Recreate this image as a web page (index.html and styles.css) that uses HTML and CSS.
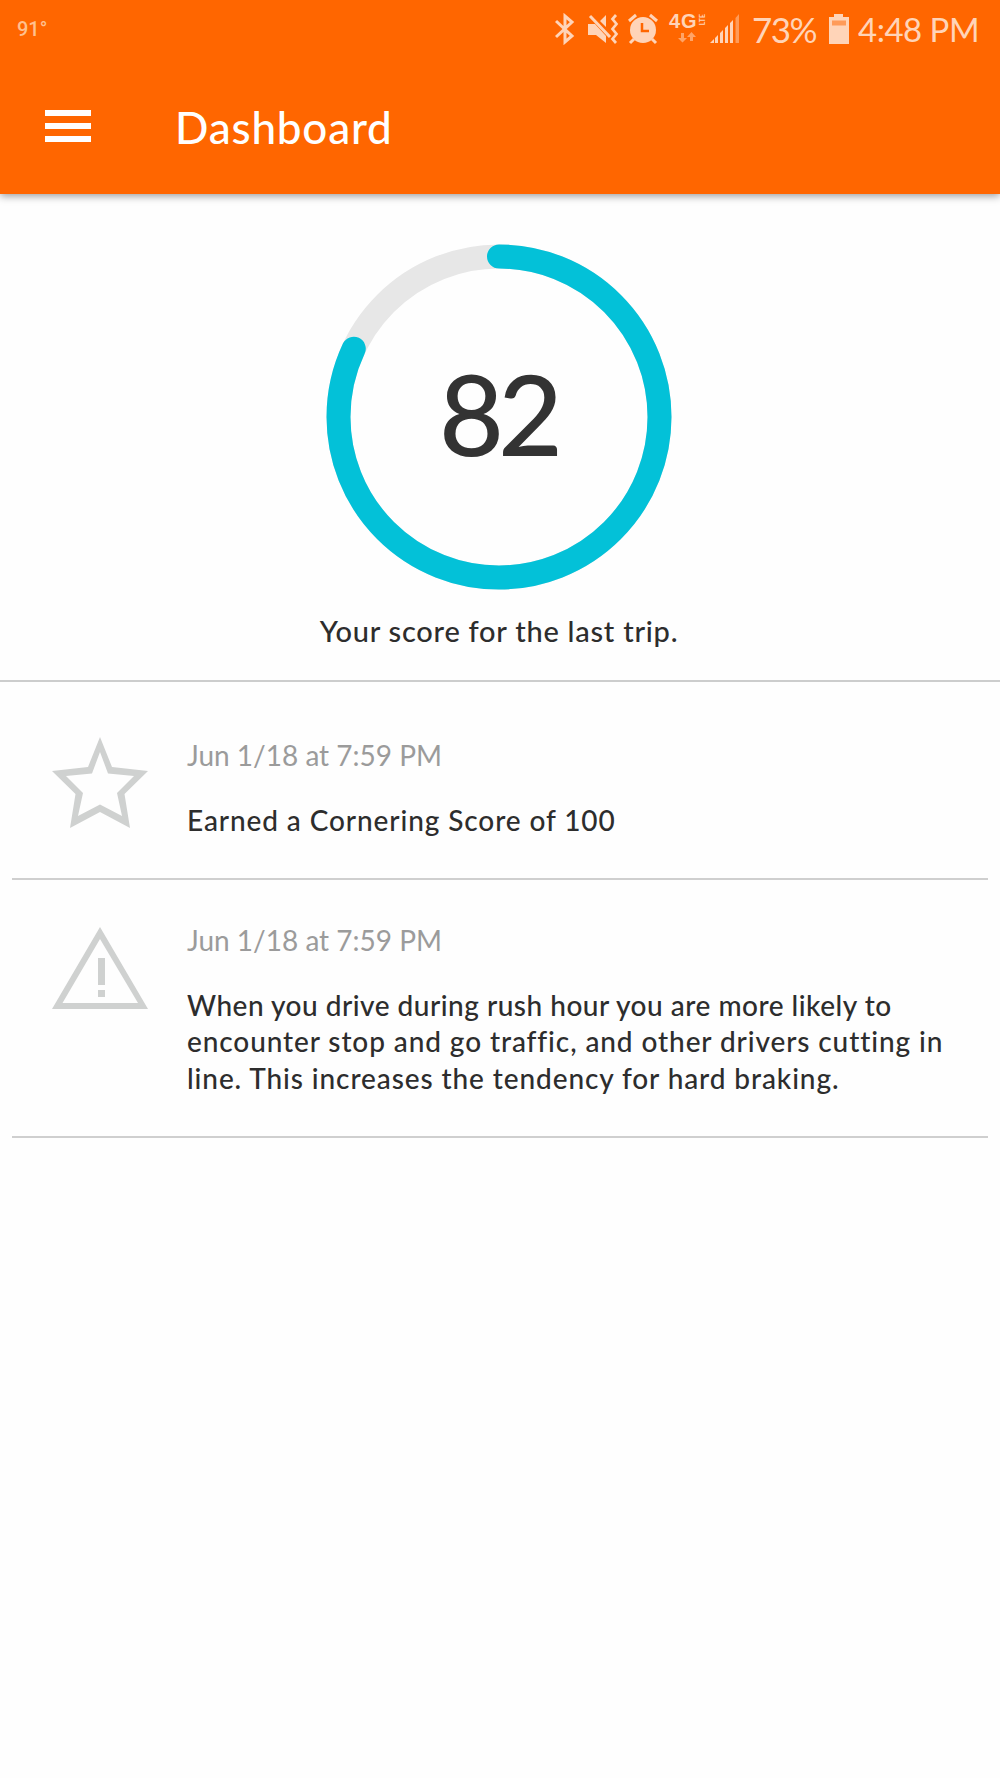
FILE: index.html
```html
<!DOCTYPE html>
<html lang="en">
<head>
  <meta charset="UTF-8">
  <title>Dashboard</title>
  <link rel="stylesheet" href="styles.css">
</head>
<body>

  <header class="header">
    <div class="status-bar">
      <span class="temperature">91°</span>
      <div class="status-icons">
        <svg class="icon-bluetooth" viewBox="0 0 20 32" width="20" height="32">
          <path d="M1 8 L17 23 L10 29 V3 L17 9 L1 24" fill="none" stroke="#ffd4b8" stroke-width="3"/>
        </svg>
        <svg class="icon-mute" viewBox="0 0 32 32" width="32" height="32">
          <path d="M1 11 H8 L19 23 V30 L9 22 H1 Z M13 8 L19 2 V14 Z" fill="#ffd4b8"/>
          <path d="M3 3 L23 24" stroke="#ffd4b8" stroke-width="3"/>
          <path d="M29 2 L25.5 6 L29.5 11 L25.5 16 L29.5 21 L25.5 26 L29 30" fill="none" stroke="#ffd4b8" stroke-width="2.7"/>
        </svg>
        <svg class="icon-alarm" viewBox="0 0 30 32" width="30" height="32">
          <circle cx="15" cy="17" r="13" fill="#ffd4b8"/>
          <path d="M1 8 L8 2 M22 2 L29 8 M6 26 L2 30 M24 26 L28 30" stroke="#ffd4b8" stroke-width="3"/>
          <path d="M14 10 V18 H21" fill="none" stroke="#ff6600" stroke-width="2.5"/>
        </svg>
        <div class="network">
          <span class="network-type">4G</span>
          <span class="network-lte">LTE</span>
          <svg class="network-arrows" viewBox="0 0 18 11" width="18" height="11">
            <path d="M3 1 H6 V6 H9 L4.500 10.500 L0 6 H3 Z M12 9 V5 H9 L13.500 0 L18 5 H15 V9 Z" fill="#ffa467"/>
          </svg>
        </div>
        <svg class="icon-signal" viewBox="0 0 30 30" width="30" height="30">
          <path d="M0 29 L4 25 V29 Z M5 24 L8 21 V29 H5 Z M10 19 L13 16 V29 H10 Z M15 14 L18 11 V29 H15 Z M20 9 L23 6 V29 H20 Z" fill="#ffd4b8"/>
          <path d="M25.500 4 L29 0 V29 H25.500 Z" fill="#ff9b59"/>
        </svg>
        <span class="battery-level">73%</span>
        <svg class="icon-battery" viewBox="0 0 20 30" width="20" height="30">
          <path d="M0 3 H5 V0 H14 V3 H20 V30 H0 Z" fill="#ffd4b8"/>
          <path d="M3 6.500 H17 V11.500 H3 Z" fill="#ff9b59"/>
        </svg>
        <span class="clock">4:48 PM</span>
      </div>
    </div>
    <div class="toolbar">
      <div class="menu-button">
        <span></span>
        <span></span>
        <span></span>
      </div>
      <h1>Dashboard</h1>
    </div>
  </header>

  <section class="score">
    <div class="score-ring">
      <svg viewBox="0 0 346 346" width="346" height="346">
        <circle class="ring-track" cx="173" cy="173" r="160.5"/>
        <circle class="ring-value" cx="173" cy="173" r="160.5" pathLength="100" stroke-dasharray="82 100" transform="rotate(-90 173 173)"/>
      </svg>
      <span class="score-value">82</span>
    </div>
    <p class="score-caption">Your score for the last trip.</p>
  </section>

  <ul class="events">
    <li class="event">
      <svg class="event-icon" viewBox="0 0 96 92" width="96" height="92">
        <path fill-rule="evenodd" d="M48 0 L60 30 L96 34 L72.500 57 L78 91 L48 75 L18 91 L23.500 57 L0 34 L36 30 Z M48 15 L40 36.500 L14 39 L31 56 L26 79 L48 67.500 L70 79 L65 56 L82 39 L56 36.500 Z"/>
      </svg>
      <div class="event-text">
        <div class="event-date">Jun 1/18 at 7:59 PM</div>
        <div class="event-message">Earned a Cornering Score of 100</div>
      </div>
    </li>
    <li class="event warning">
      <svg class="event-icon" viewBox="0 0 96 82" width="96" height="82">
        <path fill-rule="evenodd" d="M48 0 L96 82 H0 Z M48 12 L10.500 76 H86 Z"/>
        <path d="M46 31 H53 V58 H46 Z M46 63 H53 V70 H46 Z"/>
      </svg>
      <div class="event-text">
        <div class="event-date">Jun 1/18 at 7:59 PM</div>
        <div class="event-message"><span class="tight">When you drive during rush hour you are more likely to</span><br>encounter stop and go traffic, and other drivers cutting in<br>line. This increases the tendency for hard braking.</div>
      </div>
    </li>
  </ul>

</body>
</html>
```
FILE: styles.css
```css
* {
  box-sizing: border-box;
}

body {
  margin: 0;
  min-height: 1778px;
  background-color: #fefefe;
  color: #2d2d2d;
  font-family: Lato, sans-serif;
  font-size: 28px;
}

.header {
  height: 194px;
  background-color: #ff6600;
  box-shadow: 0 2px 8px rgba(0, 0, 0, 0.4);
}

.status-bar {
  display: flex;
  justify-content: space-between;
  height: 60px;
  padding: 0 22px 0 17px;
  color: #ffd4b8;
}

.temperature {
  color: #ffc08f;
  font-family: Roboto, sans-serif;
  font-size: 20px;
  font-weight: 500;
  line-height: 59px;
}

.status-icons {
  display: flex;
  height: 58px;
  align-items: center;
}

.icon-mute {
  margin-left: 12px;
}

.icon-alarm {
  margin-left: 9px;
}

.network {
  position: relative;
  width: 38px;
  height: 30px;
  margin-left: 11px;
}

.network-type {
  position: absolute;
  top: 0;
  left: 0;
  font-family: "Liberation Sans", sans-serif;
  font-size: 20px;
  font-weight: bold;
  line-height: 14px;
  letter-spacing: 1px;
}

.network-lte {
  position: absolute;
  top: 0;
  left: 30px;
  font-size: 7px;
  font-weight: bold;
  line-height: 7px;
  writing-mode: vertical-rl;
  transform: rotate(180deg);
}

.network-arrows {
  position: absolute;
  top: 18px;
  left: 9px;
}

.icon-signal {
  margin-left: 3px;
}

.battery-level {
  width: 66px;
  margin-left: 12px;
  font-size: 35px;
  letter-spacing: -1.5px;
}

.icon-battery {
  margin-left: 11px;
}

.clock {
  width: 120px;
  margin-left: 9px;
  font-size: 33px;
  letter-spacing: -0.5px;
  white-space: nowrap;
}

.toolbar {
  display: flex;
  align-items: center;
  height: 132px;
  padding-left: 45px;
}

.menu-button {
  display: flex;
  flex-direction: column;
  gap: 7px;
  width: 46px;
}

.menu-button span {
  height: 6px;
  background-color: white;
}

h1 {
  margin: 2px 0 0 84px;
  color: white;
  font-size: 44px;
  font-weight: 500;
  line-height: 60px;
  letter-spacing: 0.8px;
}

.score {
  display: flex;
  flex-direction: column;
  align-items: center;
  height: 488px;
  padding: 50px 2px 0 0;
  border-bottom: 2px solid #cccdcd;
}

.score-ring {
  display: grid;
  place-items: center;
  width: 346px;
  height: 346px;
}

.score-ring svg,
.score-value {
  grid-area: 1 / 1;
}

.ring-track,
.ring-value {
  fill: none;
  stroke-width: 24;
}

.ring-track {
  stroke: #e7e7e7;
}

.ring-value {
  stroke: #03c1d8;
  stroke-linecap: round;
}

.score-value {
  margin: -8px 2px 0 0;
  color: #333333;
  font-size: 112px;
  font-weight: 500;
  line-height: 120px;
  letter-spacing: -6px;
}

.score-caption {
  margin: 21px 0 0;
  font-size: 29px;
  font-weight: 500;
  line-height: 40px;
  letter-spacing: 0.75px;
}

.events {
  margin: 0;
  padding: 0 12px;
  list-style: none;
}

.event {
  display: flex;
  height: 198px;
  padding: 55px 0 0 40px;
  border-bottom: 2px solid #cfcfcf;
}

.event.warning {
  height: 258px;
  padding-top: 47px;
}

.event-icon {
  fill: #cfd1d0;
}

.event-text {
  margin-left: 39px;
}

.warning .event-text {
  margin-top: -5px;
}

.event-date {
  color: #9b9b9b;
  font-size: 28px;
  line-height: 36px;
}

.event-message {
  margin-top: 29px;
  font-size: 28px;
  font-weight: 500;
  line-height: 36.3px;
  letter-spacing: 0.9px;
  white-space: nowrap;
}

.event-message .tight {
  letter-spacing: 0.5px;
}
```
